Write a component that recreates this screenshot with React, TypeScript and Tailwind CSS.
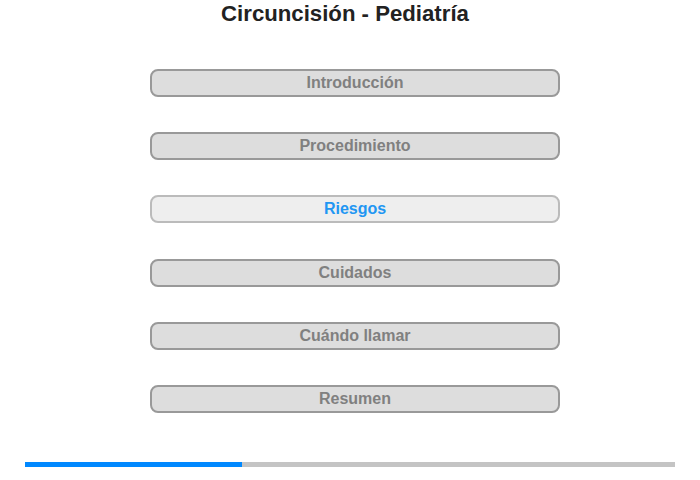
const items = [
  "Introducción",
  "Procedimiento",
  "Riesgos",
  "Cuidados",
  "Cuándo llamar",
  "Resumen",
];

export default function App() {
  const active = 2;

  return (
    <div className="w-[700px] h-[480px] bg-white font-['Liberation_Sans',Arial,sans-serif] flex flex-col items-center">
      <h1 className="mr-[10px] h-[28px] leading-[28px] text-[22.2px] font-bold text-[#222]">
        Circuncisión - Pediatría
      </h1>
      <div className="ml-[10px] mt-[41px] flex flex-col gap-[35.2px]">
        {items.map((label, i) => (
          <button
            key={label}
            className={
              i === active
                ? "w-[410px] h-[28px] rounded-[8px] border-2 border-[#bbbbbb] bg-[#eeeeee] text-[16px] font-bold text-[#2196f3]"
                : "w-[410px] h-[28px] rounded-[8px] border-2 border-[#999999] bg-[#dddddd] text-[16px] font-bold text-[#808080]"
            }
          >
            {label}
          </button>
        ))}
      </div>
      <div className="mt-[49px] w-[650px] h-[5px] bg-[#c4c4c4] flex">
        <div className="w-[217px] h-full bg-[#0088ff]" />
      </div>
    </div>
  );
}
